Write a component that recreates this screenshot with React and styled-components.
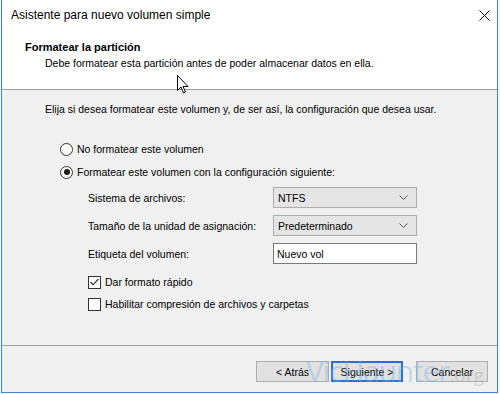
import styled, { createGlobalStyle } from "styled-components";

const Global = createGlobalStyle`
  html, body {
    margin: 0;
    padding: 0;
    background: #f7f9fc;
  }
  body {
    font-family: "Liberation Sans", Arial, sans-serif;
  }
`;

const Window = styled.div`
  position: relative;
  width: 495px;
  height: 392px;
  margin-left: 1px;
  border: 1px solid #3c86d0;
  border-top: none;
  background: #f0f0f0;
  display: flex;
  flex-direction: column;
  overflow: hidden;
  font-size: 10.5px;
  color: #000;
`;

const TitleBar = styled.div`
  height: 30px;
  background: #fff;
  display: flex;
  align-items: center;
  justify-content: space-between;
  padding: 0 7px 0 9px;
  font-size: 12px;
`;

const Header = styled.div`
  height: 60px;
  background: #fff;
  border-bottom: 1px solid #a0a0a0;
  padding: 10px 0 0 23px;
  box-sizing: border-box;
`;

const HeaderTitle = styled.div`
  font-weight: bold;
  font-size: 11px;
  line-height: 14px;
`;

const HeaderSub = styled.div`
  line-height: 14px;
  margin: 2px 0 0 20px;
`;

const Body = styled.div`
  flex: 1;
  padding: 12px 0 0 43px;
`;

const Text = styled.div`
  line-height: 14px;
`;

const RadioList = styled.div`
  margin: 26px 0 0 15px;
  display: flex;
  flex-direction: column;
  gap: 9px;
`;

const Option = styled.label`
  display: flex;
  align-items: center;
  gap: 4px;
  height: 14px;
  line-height: 14px;
`;

const Radio = styled.span`
  width: 11px;
  height: 11px;
  border-radius: 50%;
  border: 1px solid #333;
  background: #fff;
  display: flex;
  align-items: center;
  justify-content: center;
  &::after {
    content: "";
    width: 6px;
    height: 6px;
    border-radius: 50%;
    background: ${(p) => (p.checked ? "#1a1a1a" : "transparent")};
  }
`;

const Form = styled.div`
  margin: 8px 0 0 43px;
  display: grid;
  grid-template-columns: 185px 144px;
  grid-auto-rows: 21px;
  row-gap: 7px;
  align-items: center;
`;

const Select = styled.div`
  height: 21px;
  box-sizing: border-box;
  border: 1px solid #adadad;
  background: #e5e5e5;
  display: flex;
  align-items: center;
  justify-content: space-between;
  padding: 0 8px 0 4px;
`;

const Input = styled.div`
  height: 21px;
  box-sizing: border-box;
  border: 1px solid #7a7a7a;
  background: #fff;
  display: flex;
  align-items: center;
  padding: 0 3px;
`;

const Checks = styled.div`
  margin: 11px 0 0 43px;
  display: flex;
  flex-direction: column;
  gap: 8px;
`;

const Box = styled.span`
  width: 11px;
  height: 11px;
  border: 1px solid #333;
  background: #fff;
  display: flex;
  align-items: center;
  justify-content: center;
`;

const Footer = styled.div`
  height: 47px;
  border-top: 1px solid #a0a0a0;
  display: flex;
  justify-content: flex-end;
  padding: 15px 9px 0 0;
  box-sizing: border-box;
`;

const Button = styled.div`
  width: ${(p) => p.w}px;
  height: 21px;
  box-sizing: border-box;
  border: 1px solid ${(p) => (p.primary ? "#2b6fcf" : "#adadad")};
  box-shadow: ${(p) => (p.primary ? "inset 0 0 0 1px #2b6fcf" : "none")};
  background: #e1e1e1;
  display: flex;
  align-items: center;
  justify-content: center;
  margin-left: ${(p) => p.gap}px;
`;

const Watermark = styled.div`
  position: absolute;
  left: 304px;
  top: 350px;
  font-family: "Open Sans", sans-serif;
  font-size: 30px;
  letter-spacing: -1.2px;
  color: rgba(120, 175, 225, 0.4);
  pointer-events: none;
  white-space: nowrap;
  span {
    font-size: 19px;
    letter-spacing: 0;
    color: rgba(170, 170, 170, 0.45);
  }
`;

const Cursor = styled.svg`
  position: absolute;
  left: 175px;
  top: 75px;
`;

const Chevron = () => (
  <svg width="9" height="6" viewBox="0 0 9 6">
    <polyline points="0.5,0.5 4.5,4.5 8.5,0.5" fill="none" stroke="#555" strokeWidth="1" />
  </svg>
);

export default function App() {
  return (
    <>
      <Global />
      <Window>
        <TitleBar>
          <span>Asistente para nuevo volumen simple</span>
          <svg width="11" height="11" viewBox="0 0 11 11">
            <path d="M0.5 0.5 L10.5 10.5 M10.5 0.5 L0.5 10.5" stroke="#111" strokeWidth="1" />
          </svg>
        </TitleBar>
        <Header>
          <HeaderTitle>Formatear la partición</HeaderTitle>
          <HeaderSub>Debe formatear esta partición antes de poder almacenar datos en ella.</HeaderSub>
        </Header>
        <Body>
          <Text>Elija si desea formatear este volumen y, de ser así, la configuración que desea usar.</Text>
          <RadioList>
            <Option>
              <Radio />
              No formatear este volumen
            </Option>
            <Option>
              <Radio checked />
              Formatear este volumen con la configuración siguiente:
            </Option>
          </RadioList>
          <Form>
            <span>Sistema de archivos:</span>
            <Select>
              NTFS
              <Chevron />
            </Select>
            <span>Tamaño de la unidad de asignación:</span>
            <Select>
              Predeterminado
              <Chevron />
            </Select>
            <span>Etiqueta del volumen:</span>
            <Input>Nuevo vol</Input>
          </Form>
          <Checks>
            <Option>
              <Box>
                <svg width="9" height="8" viewBox="0 0 9 8">
                  <polyline points="0.5,4 3.2,6.8 8.5,0.8" fill="none" stroke="#222" strokeWidth="1.1" />
                </svg>
              </Box>
              Dar formato rápido
            </Option>
            <Option>
              <Box />
              Habilitar compresión de archivos y carpetas
            </Option>
          </Checks>
        </Body>
        <Footer>
          <Button w={73} gap={0}>&lt; Atrás</Button>
          <Button w={72} gap={2} primary>
            Siguiente &gt;
          </Button>
          <Button w={72} gap={13}>Cancelar</Button>
        </Footer>
        <Cursor width="12" height="19" viewBox="0 0 12 19">
          <path d="M0.5 0.5 L0.5 15.5 L4 12 L6.5 18 L8.5 17 L6 11.5 L11 11.5 Z" fill="#fff" stroke="#000" strokeWidth="1" />
        </Cursor>
        <Watermark>
          VicHaunter<span>.org</span>
        </Watermark>
      </Window>
    </>
  );
}
